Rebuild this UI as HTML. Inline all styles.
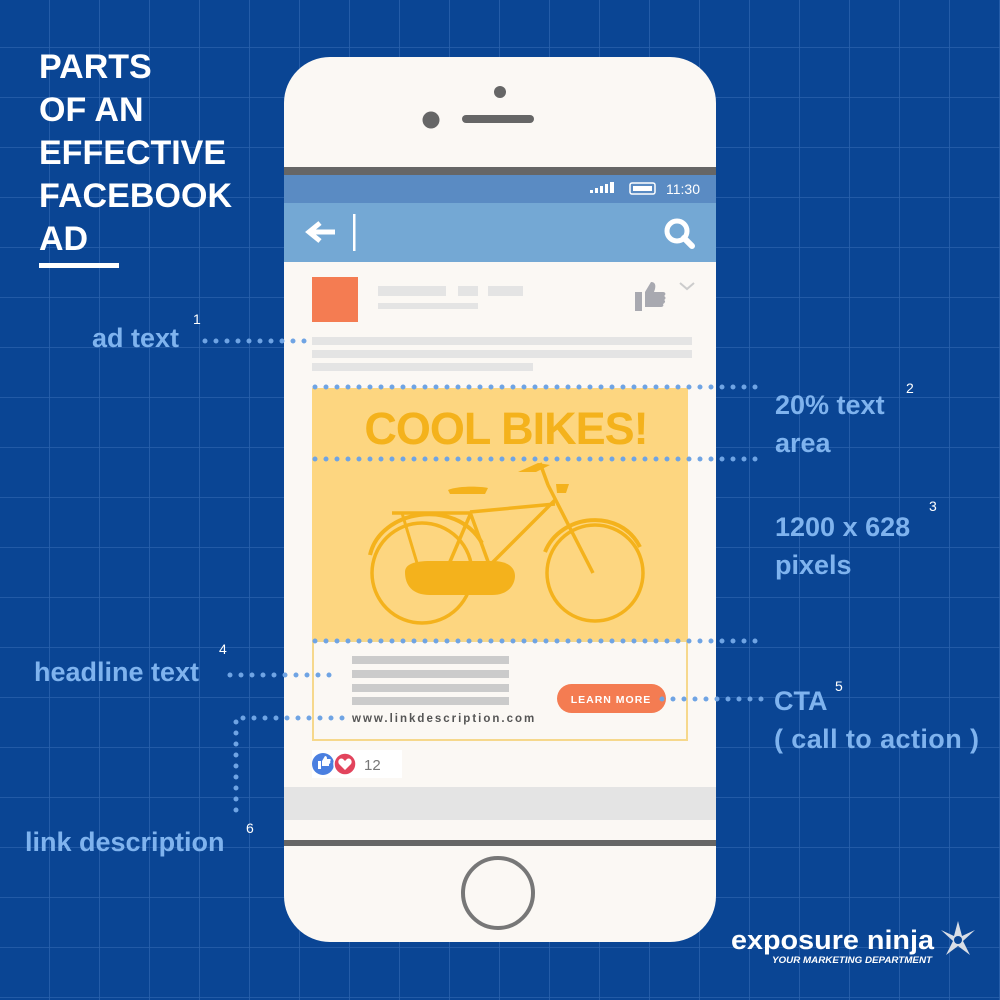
<!DOCTYPE html>
<html><head><meta charset="utf-8"><style>
body{margin:0;width:1000px;height:1000px;overflow:hidden;background:#0a4594;font-family:"Liberation Sans",sans-serif}
svg{position:absolute;left:0;top:0}
</style></head><body>
<svg width="1000" height="1000" viewBox="0 0 1000 1000">
<defs>
<pattern id="g" x="0" y="-2" width="50" height="50" patternUnits="userSpaceOnUse">
<path d="M50 0V50M0 50H50" stroke="#2a61ac" stroke-width="1.6" fill="none"/>
</pattern>
</defs>
<rect width="1000" height="1000" fill="url(#g)"/>
<g fill="#fff" font-weight="bold" font-size="34">
<text x="39" y="78">PARTS</text>
<text x="39" y="121">OF AN</text>
<text x="39" y="164">EFFECTIVE</text>
<text x="39" y="207" textLength="193">FACEBOOK</text>
<text x="39" y="250">AD</text>
</g>
<rect x="39" y="263" width="80" height="5" fill="#fff"/>
<rect x="284" y="57" width="432" height="885" rx="46" fill="#fbf8f4"/>
<circle cx="500" cy="92" r="6" fill="#666"/>
<circle cx="431" cy="120" r="8.5" fill="#666"/>
<line x1="466" y1="119" x2="530" y2="119" stroke="#666" stroke-width="8" stroke-linecap="round"/>
<rect x="284" y="167" width="432" height="8" fill="#666"/>
<rect x="284" y="175" width="432" height="28" fill="#5a8bc3"/>
<rect x="284" y="203" width="432" height="59" fill="#74a8d4"/>
<g fill="#fff"><rect x="590" y="190" width="3" height="3"/><rect x="595" y="188" width="3" height="5"/><rect x="600" y="186" width="3" height="7"/><rect x="605" y="184" width="3" height="9"/><rect x="610" y="182" width="4" height="11"/></g>
<rect x="630" y="183" width="25" height="11" rx="2" fill="none" stroke="#fff" stroke-width="1.5"/><rect x="633" y="186" width="19" height="5" fill="#fff"/>
<text x="666" y="194" font-size="14" fill="#fff">11:30</text>
<path d="M335 232H310M320 223L309 232L320 241" stroke="#fff" stroke-width="5" fill="none"/>
<rect x="353" y="214" width="2.5" height="37" fill="#fff"/>
<circle cx="677" cy="231" r="10" fill="none" stroke="#fff" stroke-width="5"/>
<line x1="684" y1="238" x2="692" y2="246" stroke="#fff" stroke-width="6" stroke-linecap="round"/>
<rect x="312" y="277" width="46" height="45" fill="#f47c52"/>
<g fill="#e4e4e4">
<rect x="378" y="286" width="68" height="10"/><rect x="458" y="286" width="20" height="10"/><rect x="488" y="286" width="35" height="10"/>
<rect x="378" y="303" width="100" height="6"/>
<rect x="312" y="337" width="380" height="8"/><rect x="312" y="350" width="380" height="8"/><rect x="312" y="363" width="221" height="8"/>
</g>
<path d="M635 292h7v19h-7z M645 292l6-10c4 0 5 3 4 7l-1 3h9c3 0 3 3 1 4 2 1 2 3 0 4 2 1 1 3-1 4 1 2 0 3-3 3h-15z" fill="#a8a9b0"/>
<path d="M680 283l7 6 7-6" stroke="#ccc" stroke-width="2" fill="none"/>
<rect x="312" y="388" width="376" height="252" fill="#fdd680"/>
<text x="506" y="444" text-anchor="middle" font-size="45" font-weight="bold" fill="#f4b21c" letter-spacing="-1">COOL BIKES!</text>
<g stroke="#f4b21c" fill="none" stroke-width="3.5">
<circle cx="422" cy="573" r="50"/><circle cx="595" cy="573" r="48"/>
<path d="M370 555c10-45 85-58 112-12" stroke-width="4"/>
<path d="M545 552c15-38 75-45 95-5" stroke-width="4"/>
<path d="M392 513h78M470 515l-30 70M470 512l85-8M555 500l-75 75M470 512l20 55M548 485l45 88M548 485l-8-22"/>
<path d="M402 513l18 60" stroke-width="3"/>
</g>
<g fill="#f4b21c"><path d="M448 490c10-4 30-4 40-2l-3 6h-35z"/><path d="M518 472l20-9 12 2-14 7z"/><path d="M556 484h13l-3 9h-9z"/>
<path d="M405 572c0-8 10-11 25-11h62c18 0 23 8 23 15s-5 19-23 19h-62c-18 0-25-10-25-23z"/></g>
<rect x="313" y="641" width="374" height="99" fill="none" stroke="#f6d88c" stroke-width="2"/>
<g fill="#cbcbcb"><rect x="352" y="656" width="157" height="8"/><rect x="352" y="670" width="157" height="8"/><rect x="352" y="684" width="157" height="8"/><rect x="352" y="697" width="157" height="8"/></g>
<text x="352" y="722" font-size="11.5" font-weight="bold" fill="#555" letter-spacing="2">www.linkdescription.com</text>
<rect x="557" y="684" width="109" height="29" rx="14.5" fill="#f47c52"/>
<text x="611" y="703" font-size="10.5" font-weight="bold" fill="#fff" text-anchor="middle" letter-spacing="1">LEARN MORE</text>
<rect x="312" y="750" width="90" height="28" fill="#fff"/>
<circle cx="323" cy="764" r="11" fill="#4a7fe0"/><circle cx="345" cy="764" r="11" fill="#e2445c" stroke="#fff" stroke-width="1.5"/>
<path d="M345 770l-6-6c-2-3 1-7 4-5l2 2 2-2c3-2 6 2 4 5z" fill="#fff"/>
<path d="M318 761h3v8h-3zM322 761l3-5c2 0 2 2 2 3h3c1 0 1 2 0 2 1 1 0 3-1 3v2h-7z" fill="#fff"/>
<text x="364" y="770" font-size="15" fill="#777">12</text>
<rect x="284" y="787" width="432" height="33" fill="#e4e4e4"/>
<rect x="284" y="840" width="432" height="6" fill="#666"/>
<circle cx="498" cy="893" r="35" fill="none" stroke="#777" stroke-width="4"/>
<g stroke="#6fa4e4" stroke-width="5" stroke-linecap="round" stroke-dasharray="0 11" fill="none">
<path d="M205 341H305"/>
<path d="M315 387H762"/><path d="M315 459H762"/><path d="M315 641H762"/>
<path d="M230 675H340"/>
<path d="M662 699H762"/>
<path d="M342 718H236V818"/>
</g>
<g fill="#7fb3ee" font-size="27" font-weight="bold">
<text x="92" y="347">ad text</text>
<text x="775" y="414">20% text</text><text x="775" y="452">area</text>
<text x="775" y="536">1200 x 628</text><text x="775" y="574">pixels</text>
<text x="34" y="681">headline text</text>
<text x="774" y="710">CTA</text><text x="774" y="748" textLength="205">( call to action )</text>
<text x="25" y="851">link description</text>
</g>
<g fill="#fff" font-size="14">
<text x="193" y="324">1</text><text x="906" y="393">2</text><text x="929" y="511">3</text><text x="219" y="654">4</text><text x="835" y="691">5</text><text x="246" y="833">6</text>
</g>
<text x="731" y="949" font-size="27" font-weight="bold" fill="#fff" textLength="203" lengthAdjust="spacingAndGlyphs">exposure ninja</text>
<text x="772" y="963" font-size="9" font-style="italic" font-weight="bold" fill="#fff" textLength="160" lengthAdjust="spacingAndGlyphs">YOUR MARKETING DEPARTMENT</text>
<g fill="#d8dde6" transform="translate(958 940)">
<path d="M0-19L4-4L17-10L5 1L12 15L0 6L-12 15L-5 1L-17-10L-4-4z"/><circle r="4" fill="#0a4594"/>
</g>
</svg>
</body></html>
